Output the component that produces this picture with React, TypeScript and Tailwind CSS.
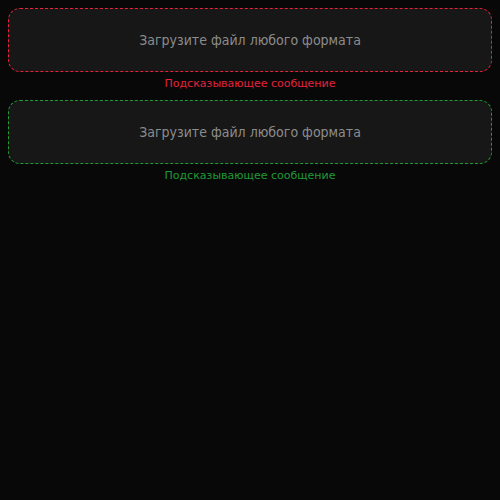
import React from "react";

type Status = "error" | "success";

const styles: Record<Status, { border: string; text: string }> = {
  error: { border: "border-[#e5213c]", text: "text-[#e5213c]" },
  success: { border: "border-[#1f9a35]", text: "text-[#1f9a35]" },
};

function FileDrop({ status, hint }: { status: Status; hint: string }) {
  const s = styles[status];
  return (
    <div className="flex flex-col">
      <label
        className={`flex h-16 cursor-pointer items-center justify-center rounded-xl border border-dashed bg-[#171717] ${s.border}`}
      >
        <span className="font-['DejaVu_Sans_Condensed','DejaVu_Sans',sans-serif] text-[14px] text-[#8c8c8c]">
          Загрузите файл любого формата
        </span>
        <input type="file" className="hidden" />
      </label>
      <p className={`mt-1 text-center text-[11px] leading-4 ${s.text}`}>{hint}</p>
    </div>
  );
}

export default function App() {
  return (
    <div className="flex min-h-screen flex-col gap-2 bg-[#080808] p-2 font-['DejaVu_Sans',sans-serif]">
      <FileDrop status="error" hint="Подсказывающее сообщение" />
      <FileDrop status="success" hint="Подсказывающее сообщение" />
    </div>
  );
}
